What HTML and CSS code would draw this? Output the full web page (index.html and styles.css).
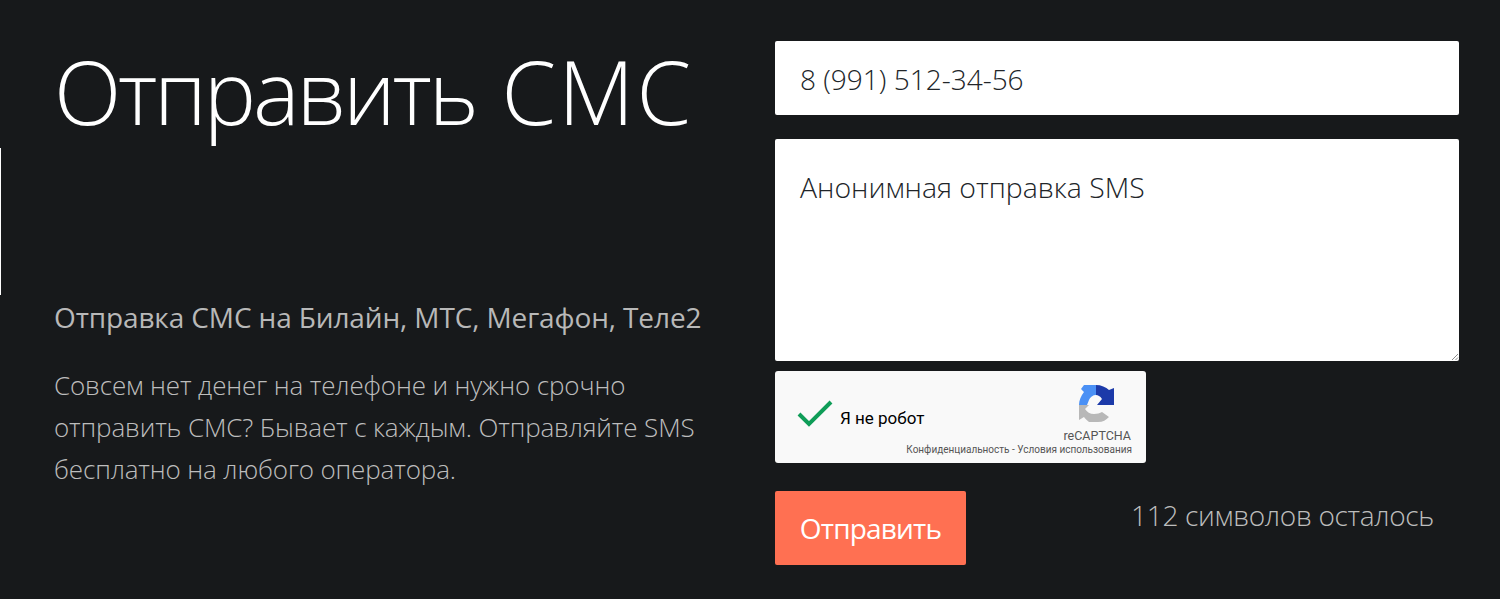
FILE: index.html
```html
<!DOCTYPE html>
<html lang="ru">
<head>
<meta charset="utf-8">
<title>Отправить СМС</title>
<link rel="stylesheet" href="styles.css">
</head>
<body>
<div class="edge"></div>
<main class="page">
  <section class="intro">
    <h1 class="title"><span class="title-verb">Отправить</span> <span class="title-noun">СМС</span></h1>
    <h2 class="subtitle">Отправка СМС на Билайн, МТС, Мегафон, Теле2</h2>
    <p class="lead">Совсем нет денег на телефоне и нужно срочно отправить СМС? Бывает с каждым. Отправляйте SMS бесплатно на любого оператора.</p>
  </section>
  <form class="form">
    <div class="field phone">8 (991) 512-34-56</div>
    <div class="field message">Анонимная отправка SMS
      <svg class="grip" width="8" height="8" viewBox="0 0 8 8"><path d="M1 7 7 1M4.5 7 7 4.500" stroke="#8a8a8a" stroke-width="1" fill="none"/></svg>
    </div>
    <div class="captcha">
      <svg class="check" width="36" height="28" viewBox="0 0 36 28"><path d="M2 15 12 25 34 3" fill="none" stroke="#0f9d58" stroke-width="4"/></svg>
      <span class="robot">Я не робот</span>
      <div class="brand">
        <svg class="logo" width="38" height="38" viewBox="0 0 38 38">
          <path d="M1 20C1 15 3 11 6 7L3 4 6 0H18V10C15 10 12 12 11 15L9 20Z" fill="#4a90f5"/>
          <path d="M18 0C23 0 28 2 31 5L36 3V20H19L24 14C22 11 20 10 18 10Z" fill="#1c3aa9"/>
          <path d="M1 20H11L7 24C9 27 12 29 16 29C19 29 22 28 24 27L31 32C28 35 25 37 20 37H11C9 35 7 34 6 32L1 35Z" fill="#b8b8b8"/>
        </svg>
        <span class="brand-name">reCAPTCHA</span>
      </div>
      <span class="legal">Конфиденциальность - Условия использования</span>
    </div>
    <div class="actions">
      <button class="send" type="button">Отправить</button>
      <span class="counter">112 символов осталось</span>
    </div>
  </form>
</main>
</body>
</html>
```
FILE: styles.css
```css
* { box-sizing: border-box; }
html, body { margin: 0; height: 100%; }
body {
  background: #17191b;
  overflow: hidden;
  font-family: "Open Sans", "Noto Sans", sans-serif;
  font-weight: 300;
}
.edge {
  position: absolute;
  left: 0;
  top: 148px;
  width: 1px;
  height: 147px;
  background: #fff;
}
.page {
  display: grid;
  grid-template-columns: 721px 684px;
  gap: 0;
  padding: 41px 0 0 54px;
}
.intro { display: flex; flex-direction: column; }
.title {
  margin: 0;
  font-size: 88px;
  line-height: 100px;
  font-weight: 300;
  word-spacing: 3px;
  color: #fff;
  white-space: nowrap;
}
.title-verb { letter-spacing: -3.2px; }
.title-noun { letter-spacing: 2.2px; }
.subtitle {
  margin: 158px 0 0;
  font-size: 28px;
  line-height: 36px;
  font-weight: 400;
  letter-spacing: -0.12px;
  color: #b8b8b8;
  white-space: nowrap;
}
.lead {
  margin: 29px 0 0;
  width: 660px;
  font-size: 26px;
  line-height: 42px;
  letter-spacing: -0.13px;
  color: #bdbdbd;
}
.form { display: flex; flex-direction: column; }
.field {
  background: #fff;
  border-radius: 2px;
  color: #212529;
  font-size: 28px;
  padding: 0 25px;
}
.phone { height: 74px; line-height: 76px; }
.message {
  position: relative;
  height: 222px;
  margin-top: 24px;
  padding-top: 26px;
  line-height: 44px;
  font-size: 28.4px;
}
.grip { position: absolute; right: 0; bottom: 0; }
.captcha {
  position: relative;
  width: 371px;
  height: 92px;
  margin-top: 10px;
  background: #f9f9f9;
  border-radius: 3px;
  display: flex;
  align-items: center;
  font-family: Roboto, sans-serif;
  font-weight: 400;
  padding: 0 0 0 22px;
}
.check { flex: none; margin-right: 7px; margin-bottom: 9px; }
.robot { font-size: 17px; color: #000; margin-top: 1px; }
.brand {
  position: absolute;
  right: 15px;
  top: 14px;
  display: flex;
  flex-direction: column;
  align-items: center;
}
.logo { margin-right: 0; }
.brand-name { font-size: 12.5px; line-height: 14px; color: #555; margin-top: 6px; }
.legal {
  position: absolute;
  right: 14px;
  top: 72px;
  font-size: 10px;
  line-height: 14px;
  color: #555;
  white-space: nowrap;
}
.actions {
  display: flex;
  align-items: center;
  justify-content: space-between;
  margin-top: 28px;
  padding-right: 25px;
}
.send {
  width: 191px;
  height: 74px;
  border: 0;
  border-radius: 2px;
  background: #ff7052;
  color: #fff;
  font-family: inherit;
  font-size: 28px;
  font-weight: 400;
  letter-spacing: -0.8px;
  padding: 0;
}
.counter { font-size: 28px; letter-spacing: -0.3px; color: #bdbdbd; margin-bottom: 26px; }
```
